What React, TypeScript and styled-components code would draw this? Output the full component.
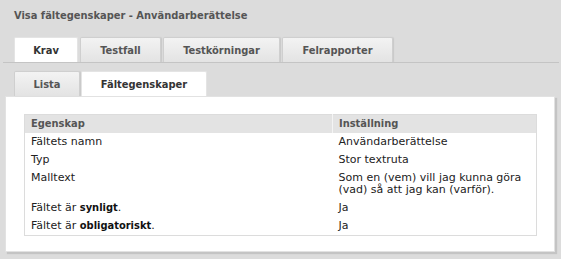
import React from "react";
import styled, { createGlobalStyle, css } from "styled-components";

const Global = createGlobalStyle`
  html, body { margin: 0; padding: 0; background: #dcdcdc; }
  body { font-family: "DejaVu Sans", Verdana, sans-serif; font-size: 11px; color: #222; }
`;

const boldFont = css`
  font-family: "DejaVu Sans Condensed", "DejaVu Sans", Verdana, sans-serif;
  font-stretch: condensed;
  font-weight: bold;
`;

const Page = styled.div`
  width: 561px;
  height: 259px;
  box-sizing: border-box;
  padding-top: 9px;
  overflow: hidden;
`;

const Title = styled.h1`
  margin: 0 0 0 14px;
  font-size: 11px;
  line-height: 14px;
  ${boldFont};
  color: #555;
`;

const TabBar = styled.div`
  display: flex;
  gap: 2px;
  margin: 14px 2px 0 3px;
  padding-left: 11px;
  border-bottom: 1px solid #c4c4c4;
  height: 25px;
`;

const SubBar = styled.div`
  display: flex;
  gap: 1px;
  margin: 8px 0 0 14px;
  height: 25px;
  position: relative;
  z-index: 1;
`;

const Tab = styled.div<{ $active?: boolean; $w: number }>`
  width: ${(p) => p.$w}px;
  height: 25px;
  box-sizing: border-box;
  display: flex;
  align-items: center;
  justify-content: center;
  ${boldFont};
  font-size: 11px;
  color: ${(p) => (p.$active ? "#333" : "#555")};
  background: ${(p) =>
    p.$active ? "#fff" : "linear-gradient(#f3f3f3, #e3e3e3)"};
  border: 1px solid ${(p) => (p.$active ? "#e4e4e4" : "#cfcfcf")};
  border-bottom: none;
  border-radius: 2px 2px 0 0;
  box-shadow: ${(p) => (p.$active ? "none" : "1px 0 1px #c8c8c8")};
`;

const Panel = styled.div`
  margin: 0 6px 0 5px;
  height: 156px;
  box-sizing: border-box;
  background: #fff;
  border: 1px solid #e2e2e2;
  box-shadow: 2px 2px 1px #c4c4c4;
  padding: 17px 17px 0 18px;
`;

const Table = styled.table`
  width: 100%;
  border-collapse: collapse;
  border: 1px solid #dcdcdc;
  font-size: 11px;
  line-height: 12px;
`;

const Th = styled.th<{ $w?: number }>`
  text-align: left;
  background: #e3e3e3;
  color: #555;
  ${boldFont};
  padding: 3px 6px 3px 6px;
  height: 18px;
  box-sizing: border-box;
  width: ${(p) => (p.$w ? `${p.$w}px` : "auto")};
  border-left: 1px solid #f4f4f4;
  &:first-child { border-left: none; }
`;

const Td = styled.td`
  padding: 3px 6px;
  vertical-align: top;
  color: #222;
`;

const Strong = styled.b`
  ${boldFont};
  color: #111;
`;

const rows: { k: React.ReactNode; v: React.ReactNode }[] = [
  { k: "Fältets namn", v: "Användarberättelse" },
  { k: "Typ", v: "Stor textruta" },
  {
    k: "Malltext",
    v: (
      <>
        Som en (vem) vill jag kunna göra
        <br />
        (vad) så att jag kan (varför).
      </>
    ),
  },
  {
    k: (
      <>
        Fältet är <Strong>synligt</Strong>.
      </>
    ),
    v: "Ja",
  },
  {
    k: (
      <>
        Fältet är <Strong>obligatoriskt</Strong>.
      </>
    ),
    v: "Ja",
  },
];

export default function App() {
  return (
    <>
      <Global />
      <Page>
        <Title>Visa fältegenskaper - Användarberättelse</Title>
        <TabBar>
          <Tab $active $w={64}>Krav</Tab>
          <Tab $w={81}>Testfall</Tab>
          <Tab $w={117}>Testkörningar</Tab>
          <Tab $w={111}>Felrapporter</Tab>
        </TabBar>
        <SubBar>
          <Tab $w={66}>Lista</Tab>
          <Tab $active $w={126}>Fältegenskaper</Tab>
        </SubBar>
        <Panel>
          <Table>
            <thead>
              <tr>
                <Th $w={308}>Egenskap</Th>
                <Th>Inställning</Th>
              </tr>
            </thead>
            <tbody>
              {rows.map((r, i) => (
                <tr key={i}>
                  <Td>{r.k}</Td>
                  <Td>{r.v}</Td>
                </tr>
              ))}
            </tbody>
          </Table>
        </Panel>
      </Page>
    </>
  );
}
